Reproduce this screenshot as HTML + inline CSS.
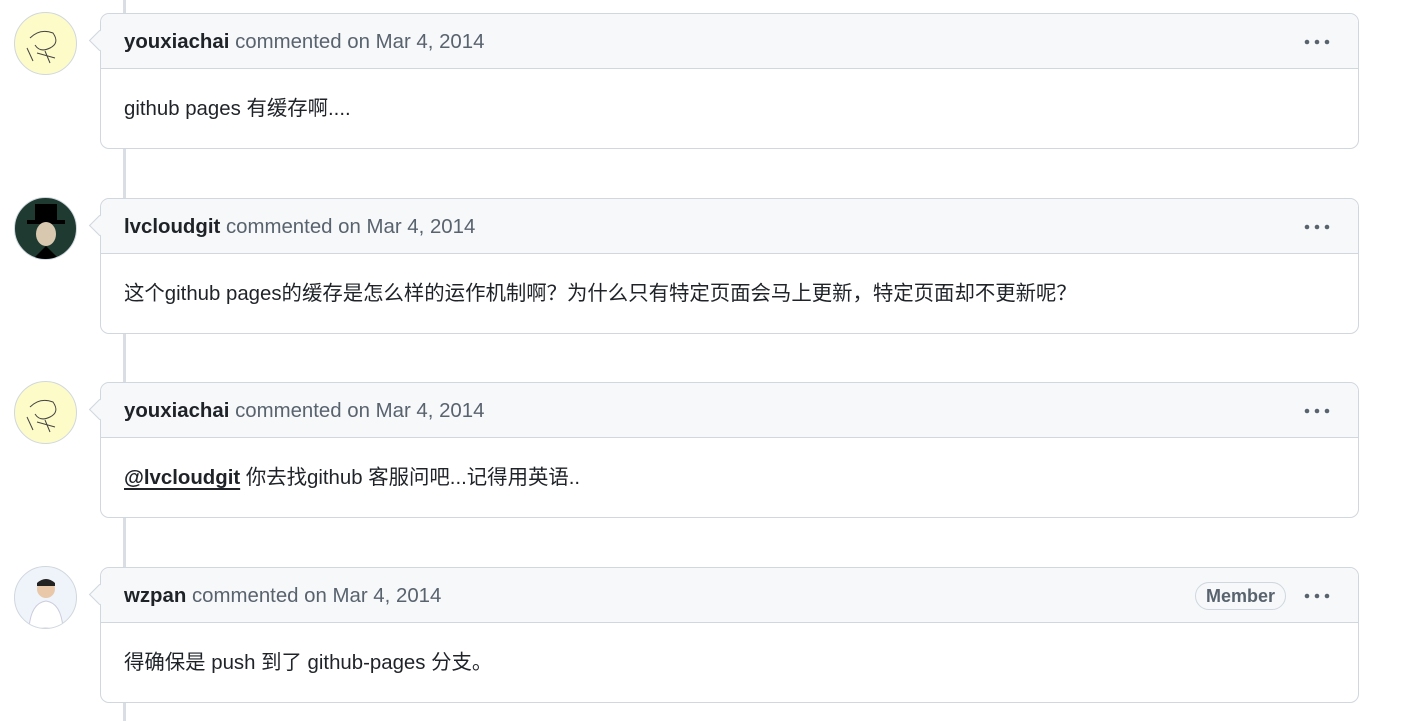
<!DOCTYPE html><html><head><meta charset="utf-8"><style>
body{margin:0;width:1405px;height:721px;background:#fff;position:relative;overflow:hidden;font-family:"Liberation Sans","Noto Sans CJK SC",sans-serif;color:#1f2328}
.line{position:absolute;left:123px;top:0;width:3px;height:721px;background:#d8dee4}
.av{position:absolute;left:14px;width:61px;height:61px;border-radius:50%;border:1px solid #d0d7de;overflow:hidden}
.box{position:absolute;left:100px;width:1257px;border:1px solid #d0d7de;border-radius:9px;background:#fff}
.box:before{content:"";position:absolute;left:-9px;top:19px;width:14px;height:14px;background:#f6f8fa;border-left:1px solid #d0d7de;border-bottom:1px solid #d0d7de;transform:rotate(45deg)}
.hd{height:54px;background:#f6f8fa;border-bottom:1px solid #d0d7de;border-radius:9px 9px 0 0;font-size:20.4px;line-height:56px;padding-left:23px;color:#59636e;position:relative}
.hd b{color:#1f2328}
.dots{position:absolute;right:28px;top:25px}
.bd{font-size:20.4px;padding-left:23px;height:79px;line-height:81px}
.mem{position:absolute;right:72px;top:14px;height:26px;line-height:26px;border:1px solid #d0d7de;border-radius:14px;padding:0 10px;font-size:18px;font-weight:bold;color:#59636e}
a{color:#1f2328;font-weight:bold;text-decoration:underline;text-underline-offset:4px}
</style></head><body>
<div class="line"></div>
<div class="av" style="top:12px;background:#fdfbc8"><svg width="61" height="61"><path d="M15 25 Q25 15 38 20 Q45 30 35 35 Q25 40 20 32 M30 38 L35 50 M22 40 L40 45 M12 35 L18 48" stroke="#444" fill="none"/></svg></div>
<div class="box" style="top:13px"><div class="hd"><b>youxiachai</b> commented on Mar 4, 2014<svg class="dots" width="26" height="6"><circle cx="3" cy="3" r="2.3" fill="#59636e"/><circle cx="13" cy="3" r="2.3" fill="#59636e"/><circle cx="23" cy="3" r="2.3" fill="#59636e"/></svg></div><div class="bd">github pages 有缓存啊....</div></div>
<div class="av" style="top:197px;background:#1f3a30"><svg width="61" height="61"><rect x="20" y="6" width="22" height="18" fill="#000"/><rect x="12" y="22" width="38" height="4" fill="#000"/><ellipse cx="31" cy="36" rx="10" ry="12" fill="#d8c8b0"/><path d="M18 61 L31 48 L44 61Z" fill="#000"/></svg></div>
<div class="box" style="top:198px"><div class="hd"><b>lvcloudgit</b> commented on Mar 4, 2014<svg class="dots" width="26" height="6"><circle cx="3" cy="3" r="2.3" fill="#59636e"/><circle cx="13" cy="3" r="2.3" fill="#59636e"/><circle cx="23" cy="3" r="2.3" fill="#59636e"/></svg></div><div class="bd">这个github pages的缓存是怎么样的运作机制啊？为什么只有特定页面会马上更新，特定页面却不更新呢？</div></div>
<div class="av" style="top:381px;background:#fdfbc8"><svg width="61" height="61"><path d="M15 25 Q25 15 38 20 Q45 30 35 35 Q25 40 20 32 M30 38 L35 50 M22 40 L40 45 M12 35 L18 48" stroke="#444" fill="none"/></svg></div>
<div class="box" style="top:382px"><div class="hd"><b>youxiachai</b> commented on Mar 4, 2014<svg class="dots" width="26" height="6"><circle cx="3" cy="3" r="2.3" fill="#59636e"/><circle cx="13" cy="3" r="2.3" fill="#59636e"/><circle cx="23" cy="3" r="2.3" fill="#59636e"/></svg></div><div class="bd"><a>@lvcloudgit</a> 你去找github 客服问吧...记得用英语..</div></div>
<div class="av" style="top:566px;background:#eef4fa"><svg width="61" height="61"><circle cx="31" cy="22" r="9" fill="#e8c8a8"/><path d="M22 16 Q31 8 40 16 L40 19 L22 19Z" fill="#222"/><path d="M14 61 Q16 36 31 34 Q46 36 48 61Z" fill="#fff" stroke="#ccd"/></svg></div>
<div class="box" style="top:567px"><div class="hd"><b>wzpan</b> commented on Mar 4, 2014<span class="mem">Member</span><svg class="dots" width="26" height="6"><circle cx="3" cy="3" r="2.3" fill="#59636e"/><circle cx="13" cy="3" r="2.3" fill="#59636e"/><circle cx="23" cy="3" r="2.3" fill="#59636e"/></svg></div><div class="bd">得确保是 push 到了 github-pages 分支。</div></div>
</body></html>
